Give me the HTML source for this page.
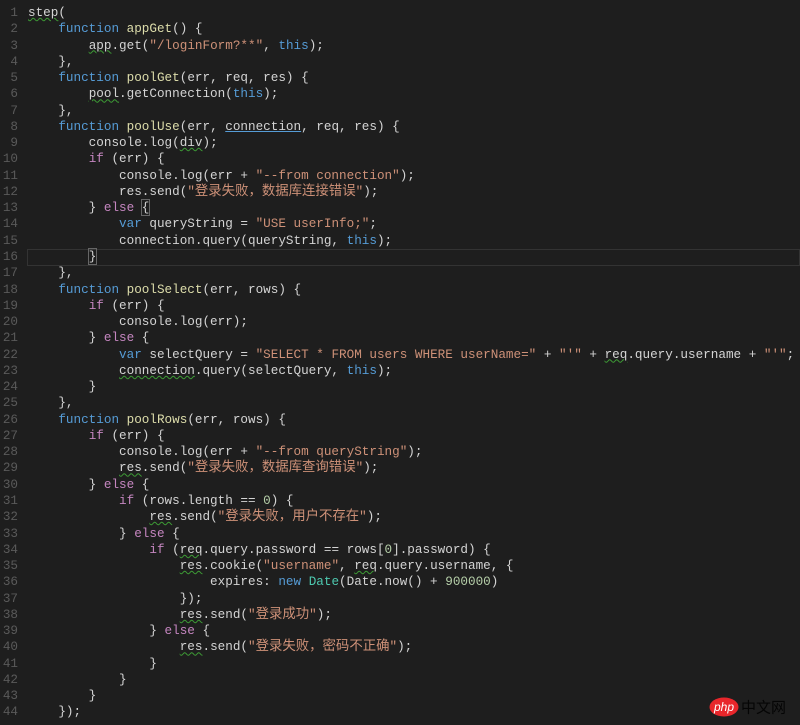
<!DOCTYPE html>
<html><head><meta charset="utf-8">
<style>
html,body{margin:0;padding:0;background:#1e1e1e;width:800px;height:725px;overflow:hidden}
#ed{position:absolute;left:0;top:5px;width:800px;font-family:"Liberation Mono","Noto Sans CJK SC",monospace;font-size:12.65px;color:#d4d4d4}
.l{height:16.28px;line-height:16.28px;white-space:pre;position:relative;overflow:visible}
.n{position:absolute;left:0;width:18px;text-align:right;color:#5a5a5a}
.c{position:absolute;left:28px;top:0}
.k{color:#569cd6}.p{color:#c586c0}.s{color:#ce9178}.f{color:#dcdcaa}.m{color:#b5cea8}.t{color:#4ec9b0}
.w{text-decoration:underline wavy #3d9b35;text-decoration-thickness:1px;text-underline-offset:1px}
.u{text-decoration:underline;text-decoration-color:#569cd6;text-underline-offset:1px}
.z{font-family:"Noto Sans CJK SC",sans-serif;font-size:13.4px;line-height:0}
.cur{position:absolute;left:27px;right:0;top:0;height:15px;border:1px solid #333}
.br{outline:1px solid #666}
#logo{position:absolute;left:709px;top:697px;width:90px;height:20px}
</style></head><body>
<div id="ed">
<div class="l"><span class="n">1</span><span class="c"><span class="w">step</span>(</span></div>
<div class="l"><span class="n">2</span><span class="c">    <span class="k">function</span> <span class="f">appGet</span>() {</span></div>
<div class="l"><span class="n">3</span><span class="c">        <span class="w">app</span>.get(<span class="s">"/loginForm?**"</span>, <span class="k">this</span>);</span></div>
<div class="l"><span class="n">4</span><span class="c">    },</span></div>
<div class="l"><span class="n">5</span><span class="c">    <span class="k">function</span> <span class="f">poolGet</span>(err, req, res) {</span></div>
<div class="l"><span class="n">6</span><span class="c">        <span class="w">pool</span>.getConnection(<span class="k">this</span>);</span></div>
<div class="l"><span class="n">7</span><span class="c">    },</span></div>
<div class="l"><span class="n">8</span><span class="c">    <span class="k">function</span> <span class="f">poolUse</span>(err, <span class="u">connection</span>, req, res) {</span></div>
<div class="l"><span class="n">9</span><span class="c">        console.log(<span class="w">div</span>);</span></div>
<div class="l"><span class="n">10</span><span class="c">        <span class="p">if</span> (err) {</span></div>
<div class="l"><span class="n">11</span><span class="c">            console.log(err + <span class="s">"--from connection"</span>);</span></div>
<div class="l"><span class="n">12</span><span class="c">            res.send(<span class="s">"<span class="z">登录失败，数据库连接错误</span>"</span>);</span></div>
<div class="l"><span class="n">13</span><span class="c">        } <span class="p">else</span> <span class="br">{</span></span></div>
<div class="l"><span class="n">14</span><span class="c">            <span class="k">var</span> queryString = <span class="s">"USE userInfo;"</span>;</span></div>
<div class="l"><span class="n">15</span><span class="c">            connection.query(queryString, <span class="k">this</span>);</span></div>
<div class="l"><span class="cur"></span><span class="n">16</span><span class="c">        <span class="br">}</span></span></div>
<div class="l"><span class="n">17</span><span class="c">    },</span></div>
<div class="l"><span class="n">18</span><span class="c">    <span class="k">function</span> <span class="f">poolSelect</span>(err, rows) {</span></div>
<div class="l"><span class="n">19</span><span class="c">        <span class="p">if</span> (err) {</span></div>
<div class="l"><span class="n">20</span><span class="c">            console.log(err);</span></div>
<div class="l"><span class="n">21</span><span class="c">        } <span class="p">else</span> {</span></div>
<div class="l"><span class="n">22</span><span class="c">            <span class="k">var</span> selectQuery = <span class="s">"SELECT * FROM users WHERE userName="</span> + <span class="s">"'"</span> + <span class="w">req</span>.query.username + <span class="s">"'"</span>;</span></div>
<div class="l"><span class="n">23</span><span class="c">            <span class="w">connection</span>.query(selectQuery, <span class="k">this</span>);</span></div>
<div class="l"><span class="n">24</span><span class="c">        }</span></div>
<div class="l"><span class="n">25</span><span class="c">    },</span></div>
<div class="l"><span class="n">26</span><span class="c">    <span class="k">function</span> <span class="f">poolRows</span>(err, rows) {</span></div>
<div class="l"><span class="n">27</span><span class="c">        <span class="p">if</span> (err) {</span></div>
<div class="l"><span class="n">28</span><span class="c">            console.log(err + <span class="s">"--from queryString"</span>);</span></div>
<div class="l"><span class="n">29</span><span class="c">            <span class="w">res</span>.send(<span class="s">"<span class="z">登录失败，数据库查询错误</span>"</span>);</span></div>
<div class="l"><span class="n">30</span><span class="c">        } <span class="p">else</span> {</span></div>
<div class="l"><span class="n">31</span><span class="c">            <span class="p">if</span> (rows.length == <span class="m">0</span>) {</span></div>
<div class="l"><span class="n">32</span><span class="c">                <span class="w">res</span>.send(<span class="s">"<span class="z">登录失败，用户不存在</span>"</span>);</span></div>
<div class="l"><span class="n">33</span><span class="c">            } <span class="p">else</span> {</span></div>
<div class="l"><span class="n">34</span><span class="c">                <span class="p">if</span> (<span class="w">req</span>.query.password == rows[<span class="m">0</span>].password) {</span></div>
<div class="l"><span class="n">35</span><span class="c">                    <span class="w">res</span>.cookie(<span class="s">"username"</span>, <span class="w">req</span>.query.username, {</span></div>
<div class="l"><span class="n">36</span><span class="c">                        expires: <span class="k">new</span> <span class="t">Date</span>(Date.now() + <span class="m">900000</span>)</span></div>
<div class="l"><span class="n">37</span><span class="c">                    });</span></div>
<div class="l"><span class="n">38</span><span class="c">                    <span class="w">res</span>.send(<span class="s">"<span class="z">登录成功</span>"</span>);</span></div>
<div class="l"><span class="n">39</span><span class="c">                } <span class="p">else</span> {</span></div>
<div class="l"><span class="n">40</span><span class="c">                    <span class="w">res</span>.send(<span class="s">"<span class="z">登录失败，密码不正确</span>"</span>);</span></div>
<div class="l"><span class="n">41</span><span class="c">                }</span></div>
<div class="l"><span class="n">42</span><span class="c">            }</span></div>
<div class="l"><span class="n">43</span><span class="c">        }</span></div>
<div class="l"><span class="n">44</span><span class="c">    });</span></div>
</div>
<svg id="logo" viewBox="0 0 90 20">
<ellipse cx="15" cy="10" rx="14.5" ry="9.5" fill="#e8262b"/>
<text x="15" y="14" font-family="Liberation Sans,sans-serif" font-style="italic" font-size="12" fill="#fff" text-anchor="middle">php</text>
<text x="32" y="15.5" font-family="Noto Sans CJK SC,sans-serif" font-size="15" fill="#050505">中文网</text>
</svg>
</body></html>
